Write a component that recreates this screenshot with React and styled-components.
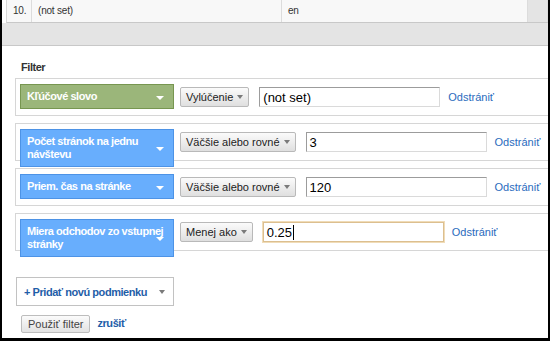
import React from "react"
import styled, { createGlobalStyle } from "styled-components"

const Global = createGlobalStyle`
  html, body { margin: 0; padding: 0; background: #fff; }
  body { font-family: "Liberation Sans", Arial, sans-serif; }
`

const rows = [
  { tone: "green", field: "Kľúčové slovo", op: "Vylúčenie", value: "(not set)" },
  { tone: "blue", field: "Počet stránok na jednu návštevu", op: "Väčšie alebo rovné", value: "3" },
  { tone: "blue", field: "Priem. čas na stránke", op: "Väčšie alebo rovné", value: "120" },
  { tone: "blue", field: "Miera odchodov zo vstupnej stránky", op: "Menej ako", value: "0.25", focused: true },
]

export default () => (
  <Frame>
    <Global />
    <TableRow>
      <Cell $w="25px">10.</Cell>
      <Cell $w="250px">(not set)</Cell>
      <Cell $w="246px">en</Cell>
      <Cell $grey />
    </TableRow>
    <GreyBand />
    <Panel>
      <PanelTitle>Filter</PanelTitle>
      {rows.map((r, i) => (
        <ConditionRow key={i}>
          <FieldSelect $tone={r.tone}>
            {r.field}
            <SelectArrow />
          </FieldSelect>
          <DropButton>
            {r.op}
            <SmallArrow />
          </DropButton>
          <ValueInput $focused={r.focused}>
            {r.value}
            {r.focused && <Caret />}
          </ValueInput>
          <RemoveLink>Odstrániť</RemoveLink>
        </ConditionRow>
      ))}
      <AddCondition>
        <span>+ Pridať novú podmienku</span>
        <SmallArrow />
      </AddCondition>
      <Actions>
        <ApplyButton>Použiť filter</ApplyButton>
        <CancelLink>zrušiť</CancelLink>
      </Actions>
    </Panel>
  </Frame>
)

const Frame = styled.div`
  box-sizing: border-box;
  width: 550px;
  height: 341px;
  border-left: 2px solid #000;
  border-right: 2px solid #000;
  border-bottom: 3px solid #000;
  overflow: hidden;
  display: flex;
  flex-direction: column;
`

const TableRow = styled.div`
  display: flex;
  height: 23px;
  margin-left: 4px;
  border-left: 1px solid #d8d8d8;
  border-bottom: 1px solid #c8c8c8;
  box-sizing: border-box;
  background: #f8f8f8;
`

const Cell = styled.div`
  box-sizing: border-box;
  width: ${p => p.$w || "auto"};
  flex: ${p => (p.$grey ? "1" : "none")};
  padding-left: 6px;
  border-right: 1px solid #dcdcdc;
  background: ${p => (p.$grey ? "#e4e4e4" : "transparent")};
  font-size: 10px;
  letter-spacing: -0.2px;
  line-height: 22px;
  color: #333;
`

const GreyBand = styled.div`
  height: 23px;
  box-sizing: border-box;
  background: #e4e4e4;
  border-bottom: 1px solid #c8c8c8;
`

const Panel = styled.div`
  flex: 1;
  padding: 14px 0 0 13px;
  display: flex;
  flex-direction: column;
`

const PanelTitle = styled.div`
  font-size: 11px;
  font-weight: bold;
  letter-spacing: -0.45px;
  line-height: 14px;
  color: #333;
  margin: 0 0 4px 6px;
`

const ConditionRow = styled.div`
  box-sizing: border-box;
  height: 38px;
  margin-bottom: 7px;
  padding-left: 4px;
  border: 1px solid #d6d6d6;
  border-right: none;
  display: flex;
  align-items: center;
`

const FieldSelect = styled.div`
  position: relative;
  align-self: flex-start;
  flex: none;
  margin-top: 5px;
  box-sizing: border-box;
  width: 154px;
  padding: 5px 4px 5px 6px;
  font-size: 11px;
  font-weight: bold;
  letter-spacing: -0.45px;
  line-height: 13px;
  color: #fff;
  background: ${p => (p.$tone === "green" ? "#9bb67a" : "#68aefd")};
  border: 1px solid ${p => (p.$tone === "green" ? "#779650" : "#4d93e6")};
`

const SelectArrow = styled.span`
  position: absolute;
  right: 9px;
  top: 50%;
  margin-top: -1px;
  border-left: 4px solid transparent;
  border-right: 4px solid transparent;
  border-top: 4px solid #fff;
`

const SmallArrow = styled.span`
  display: inline-block;
  flex: none;
  margin-left: 4px;
  border-left: 3.5px solid transparent;
  border-right: 3.5px solid transparent;
  border-top: 4px solid #7a7a7a;
`

const DropButton = styled.div`
  flex: none;
  margin-left: 6px;
  height: 20px;
  box-sizing: border-box;
  padding: 0 5px;
  display: flex;
  align-items: center;
  border: 1px solid #b9b9b9;
  border-radius: 2px;
  background: linear-gradient(#fbfbfb, #dfdfdf);
  font-size: 11px;
  color: #222;
`

const ValueInput = styled.div`
  flex: none;
  margin-left: 10px;
  width: 181px;
  height: 20px;
  box-sizing: border-box;
  padding: 0 3px;
  display: flex;
  align-items: center;
  background: #fff;
  border: 1px solid;
  border-color: ${p =>
    p.$focused ? "#dcbf8f" : "#9c9c9c #dadada #dadada #9c9c9c"};
  box-shadow: ${p => (p.$focused ? "0 0 0 1px #f0dcb8" : "none")};
  font-size: 13px;
  color: #000;
`

const Caret = styled.span`
  width: 1px;
  height: 15px;
  margin-left: 1px;
  background: #000;
`

const RemoveLink = styled.span`
  margin-left: 8px;
  font-size: 11px;
  color: #2a6bbd;
`

const AddCondition = styled.div`
  margin: 19px 0 0 1px;
  width: 158px;
  height: 29px;
  box-sizing: border-box;
  padding: 0 8px 0 7px;
  display: flex;
  align-items: center;
  justify-content: space-between;
  border: 1px solid #c2c2c2;
  font-size: 11px;
  font-weight: bold;
  letter-spacing: -0.45px;
  white-space: nowrap;
  color: #1f5ea8;
`

const Actions = styled.div`
  margin: 9px 0 0 6px;
  display: flex;
  align-items: center;
`

const ApplyButton = styled.div`
  height: 18px;
  box-sizing: border-box;
  padding: 0 6px;
  display: flex;
  align-items: center;
  border: 1px solid #bdbdbd;
  border-radius: 2px;
  background: linear-gradient(#fbfbfb, #e2e2e2);
  font-size: 11px;
  color: #444;
`

const CancelLink = styled.span`
  margin: -3px 0 0 7px;
  font-size: 11px;
  font-weight: bold;
  letter-spacing: -0.45px;
  color: #1f5ea8;
`
